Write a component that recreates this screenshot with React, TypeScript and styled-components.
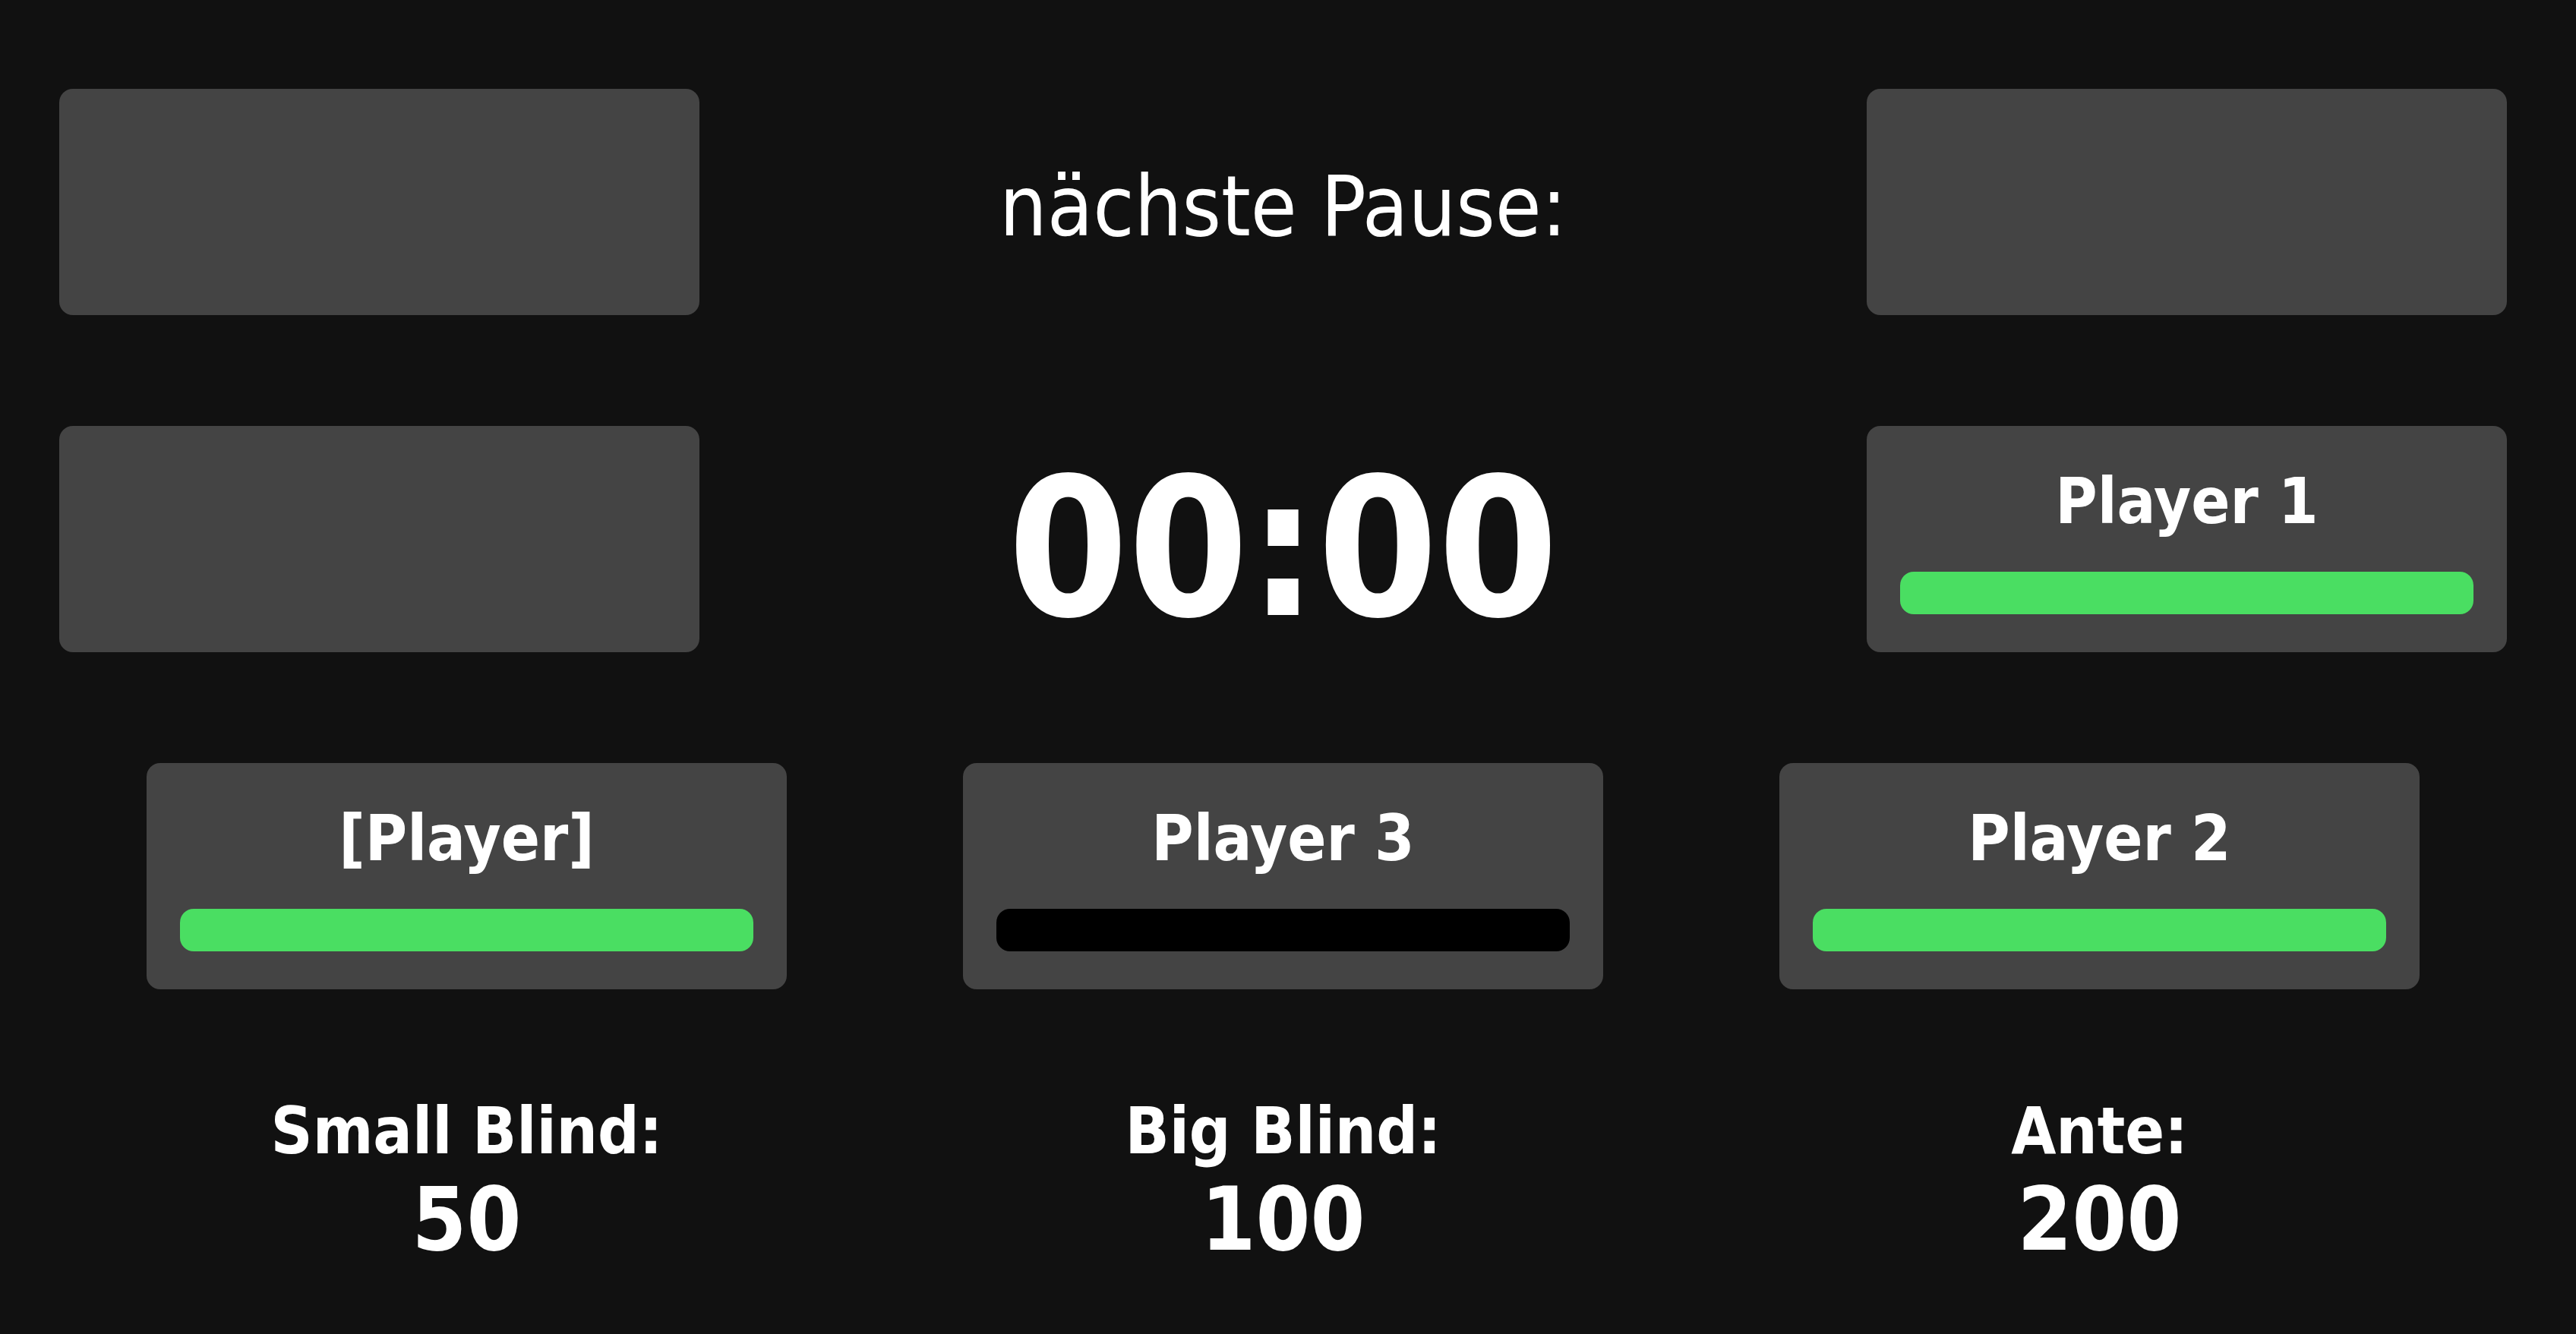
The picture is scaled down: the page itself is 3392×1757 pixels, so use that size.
import React from 'react';
import styled, { createGlobalStyle } from 'styled-components';

const GlobalStyle = createGlobalStyle`
  html, body {
    margin: 0;
    padding: 0;
    background-color: #111111;
  }
  body {
    color: #ffffff;
    font-family: "DejaVu Sans Condensed", "DejaVu Sans", sans-serif;
    font-stretch: condensed;
  }
`;

const Screen = styled.div`
  box-sizing: border-box;
  width: 3392px;
  min-height: 1757px;
  padding: 117px 91px 0 78px;
  display: flex;
  flex-direction: column;
  gap: 146px;
`;

const TopRow = styled.div`
  display: grid;
  grid-template-columns: 843px 1fr 843px;
  grid-template-rows: 298px;
  align-items: center;
`;

const Panel = styled.div`
  box-sizing: border-box;
  width: 843px;
  height: 298px;
  padding: 0 44px;
  background-color: #444444;
  border-radius: 18px;
  display: flex;
  flex-direction: column;
  justify-content: center;
  gap: 44px;
`;

const PlayerName = styled.div`
  font-size: 84px;
  font-weight: 700;
  text-align: center;
  white-space: nowrap;
`;

const Bar = styled.div<{ $color: string }>`
  height: 56px;
  border-radius: 18px;
  background-color: ${(p) => p.$color};
`;

const PauseLabel = styled.div`
  padding-top: 12px;
  font-size: 110px;
  text-align: center;
  white-space: nowrap;
`;

const Timer = styled.div`
  padding-top: 26px;
  font-size: 253px;
  line-height: 240px;
  font-weight: 700;
  text-align: center;
  white-space: nowrap;
`;

const PlayerRow = styled.div`
  display: flex;
  justify-content: center;
  gap: 232px;
`;

const BlindRow = styled.div`
  display: flex;
  justify-content: center;
  gap: 232px;
  margin-top: -9px;
`;

const Blind = styled.div`
  width: 843px;
  display: flex;
  flex-direction: column;
  align-items: center;
  font-weight: 700;
`;

const BlindLabel = styled.div`
  font-size: 85px;
`;

const BlindValue = styled.div`
  font-size: 115px;
`;

const GREEN = '#4ade62';

const PlayerPanel: React.FC<{ name: string; color: string }> = ({ name, color }) => (
  <Panel>
    <PlayerName>{name}</PlayerName>
    <Bar $color={color} />
  </Panel>
);

const blinds = [
  { label: 'Small Blind:', value: 50 },
  { label: 'Big Blind:', value: 100 },
  { label: 'Ante:', value: 200 },
];

export default function App() {
  return (
    <>
      <GlobalStyle />
      <Screen>
        <TopRow>
          <Panel />
          <PauseLabel>nächste Pause:</PauseLabel>
          <Panel />
        </TopRow>
        <TopRow>
          <Panel />
          <Timer>00:00</Timer>
          <PlayerPanel name="Player 1" color={GREEN} />
        </TopRow>
        <PlayerRow>
          <PlayerPanel name="[Player]" color={GREEN} />
          <PlayerPanel name="Player 3" color="#000000" />
          <PlayerPanel name="Player 2" color={GREEN} />
        </PlayerRow>
        <BlindRow>
          {blinds.map((b) => (
            <Blind key={b.label}>
              <BlindLabel>{b.label}</BlindLabel>
              <BlindValue>{b.value}</BlindValue>
            </Blind>
          ))}
        </BlindRow>
      </Screen>
    </>
  );
}
